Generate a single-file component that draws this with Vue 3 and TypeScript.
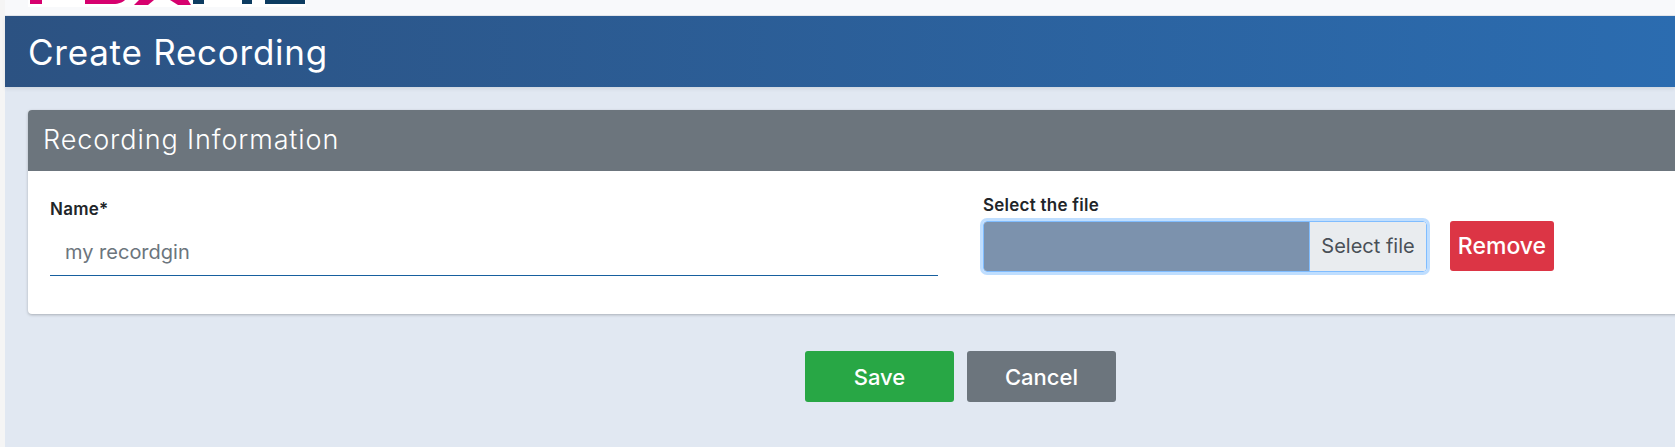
<script setup lang="ts">
const fileLabel = 'Select the file'
</script>

<template>
  <div class="page">
    <div class="sidebar-edge"></div>
    <div class="main">
      <div class="topbar">
        <svg class="logo" width="278" height="7" viewBox="0 0 278 7">
          <rect width="278" height="7" fill="#fff" />
          <rect x="2" width="12" height="4" fill="#d6006e" />
          <path d="M57 0h40c-2 2-6 4-12 4h-28z" fill="#d6006e" />
          <path d="M111 0h15l-6 5h-14z" fill="#d6006e" />
          <path d="M142 0h18l3 5h-13z" fill="#d6006e" />
          <rect x="165" width="11" height="4" fill="#0d3c61" />
          <rect x="214" width="10" height="4" fill="#0d3c61" />
          <rect x="237" width="40" height="4" fill="#0d3c61" />
        </svg>
      </div>
      <div class="title-bar">
        <h1>Create Recording</h1>
      </div>
      <div class="content">
        <section class="card">
          <div class="card-head">Recording Information</div>
          <div class="card-body">
            <div class="field name-field">
              <label>Name*</label>
              <div class="name-input">my recordgin</div>
            </div>
            <div class="field file-field">
              <label>{{ fileLabel }}</label>
              <div class="file-row">
                <div class="file-input">
                  <div class="file-name"></div>
                  <div class="file-btn">Select file</div>
                </div>
                <button class="btn remove">Remove</button>
              </div>
            </div>
          </div>
        </section>
        <div class="actions">
          <button class="btn save">Save</button>
          <button class="btn cancel">Cancel</button>
        </div>
      </div>
    </div>
  </div>
</template>

<style>
html, body {
  margin: 0;
  overflow: hidden;
  background: #e1e8f2;
}
</style>

<style scoped>
.page {
  display: flex;
  width: 1675px;
  height: 447px;
  overflow: hidden;
  font-family: Inter, "Noto Sans", sans-serif;
}
.sidebar-edge {
  width: 5px;
  flex: none;
  background: #f5f5f5;
}
.main {
  flex: 1;
  min-width: 0;
}
.topbar {
  height: 15px;
  background: #f8f9fb;
  border-bottom: 1px solid #e4e7ec;
  padding-left: 23px;
}
.logo {
  display: block;
}
.title-bar {
  height: 71px;
  background: linear-gradient(90deg, #2c5282, #2b6cb0);
  box-shadow: 0 2px 4px rgba(0, 0, 0, 0.08);
  display: flex;
  align-items: center;
  padding-left: 23px;
}
h1 {
  margin: 0;
  font-size: 35px;
  font-weight: 400;
  letter-spacing: 0.75px;
  color: #fff;
}
.content {
  padding: 23px 0 0 23px;
}
.card {
  width: 1700px;
  background: #fff;
  border-radius: 4px;
  box-shadow: 0 1px 3px rgba(0, 0, 0, 0.25);
}
.card-head {
  height: 61px;
  box-sizing: border-box;
  background: #6c757d;
  border-radius: 4px 4px 0 0;
  padding: 0 0 2px 15px;
  display: flex;
  align-items: center;
  color: #fff;
  font-size: 27px;
  font-weight: 300;
  letter-spacing: 0.9px;
}
.card-body {
  height: 143px;
  box-sizing: border-box;
  display: flex;
  padding-left: 22px;
}
.field label {
  display: block;
  font-size: 17px;
  line-height: 20px;
  font-weight: 600;
  letter-spacing: 0.25px;
  color: #212529;
}
.name-field {
  width: 888px;
  padding-top: 28px;
}
.name-input {
  margin-top: 15px;
  height: 42px;
  box-sizing: border-box;
  padding-left: 15px;
  line-height: 37px;
  font-size: 20px;
  color: #6c757d;
  border-bottom: 1px solid #17609f;
}
.file-field {
  margin-left: 45px;
  padding-top: 24px;
}
.file-row {
  display: flex;
  align-items: flex-start;
  margin-top: 6px;
}
.file-input {
  display: flex;
  width: 444px;
  height: 51px;
  box-sizing: border-box;
  border: 1px solid #80bdff;
  border-radius: 4px;
  box-shadow: 0 0 0 3px rgba(0, 123, 255, 0.25);
  overflow: hidden;
}
.file-name {
  flex: 1;
  background: #7c92ad;
}
.file-btn {
  width: 116px;
  background: #e9ecef;
  border-left: 1px solid #80bdff;
  color: #495057;
  font-size: 20px;
  line-height: 49px;
  text-align: center;
}
.btn {
  border: none;
  border-radius: 3px;
  color: #fff;
  font-family: inherit;
  font-size: 22px;
  font-weight: 500;
  padding: 0;
}
.remove {
  width: 104px;
  height: 50px;
  margin-left: 23px;
  background: #dc3545;
  font-size: 23px;
}
.actions {
  display: flex;
  justify-content: flex-start;
  gap: 13px;
  margin: 37px 0 0 777px;
}
.save, .cancel {
  width: 149px;
  height: 51px;
}
.save {
  background: #28a745;
}
.cancel {
  background: #6c757d;
}
</style>
